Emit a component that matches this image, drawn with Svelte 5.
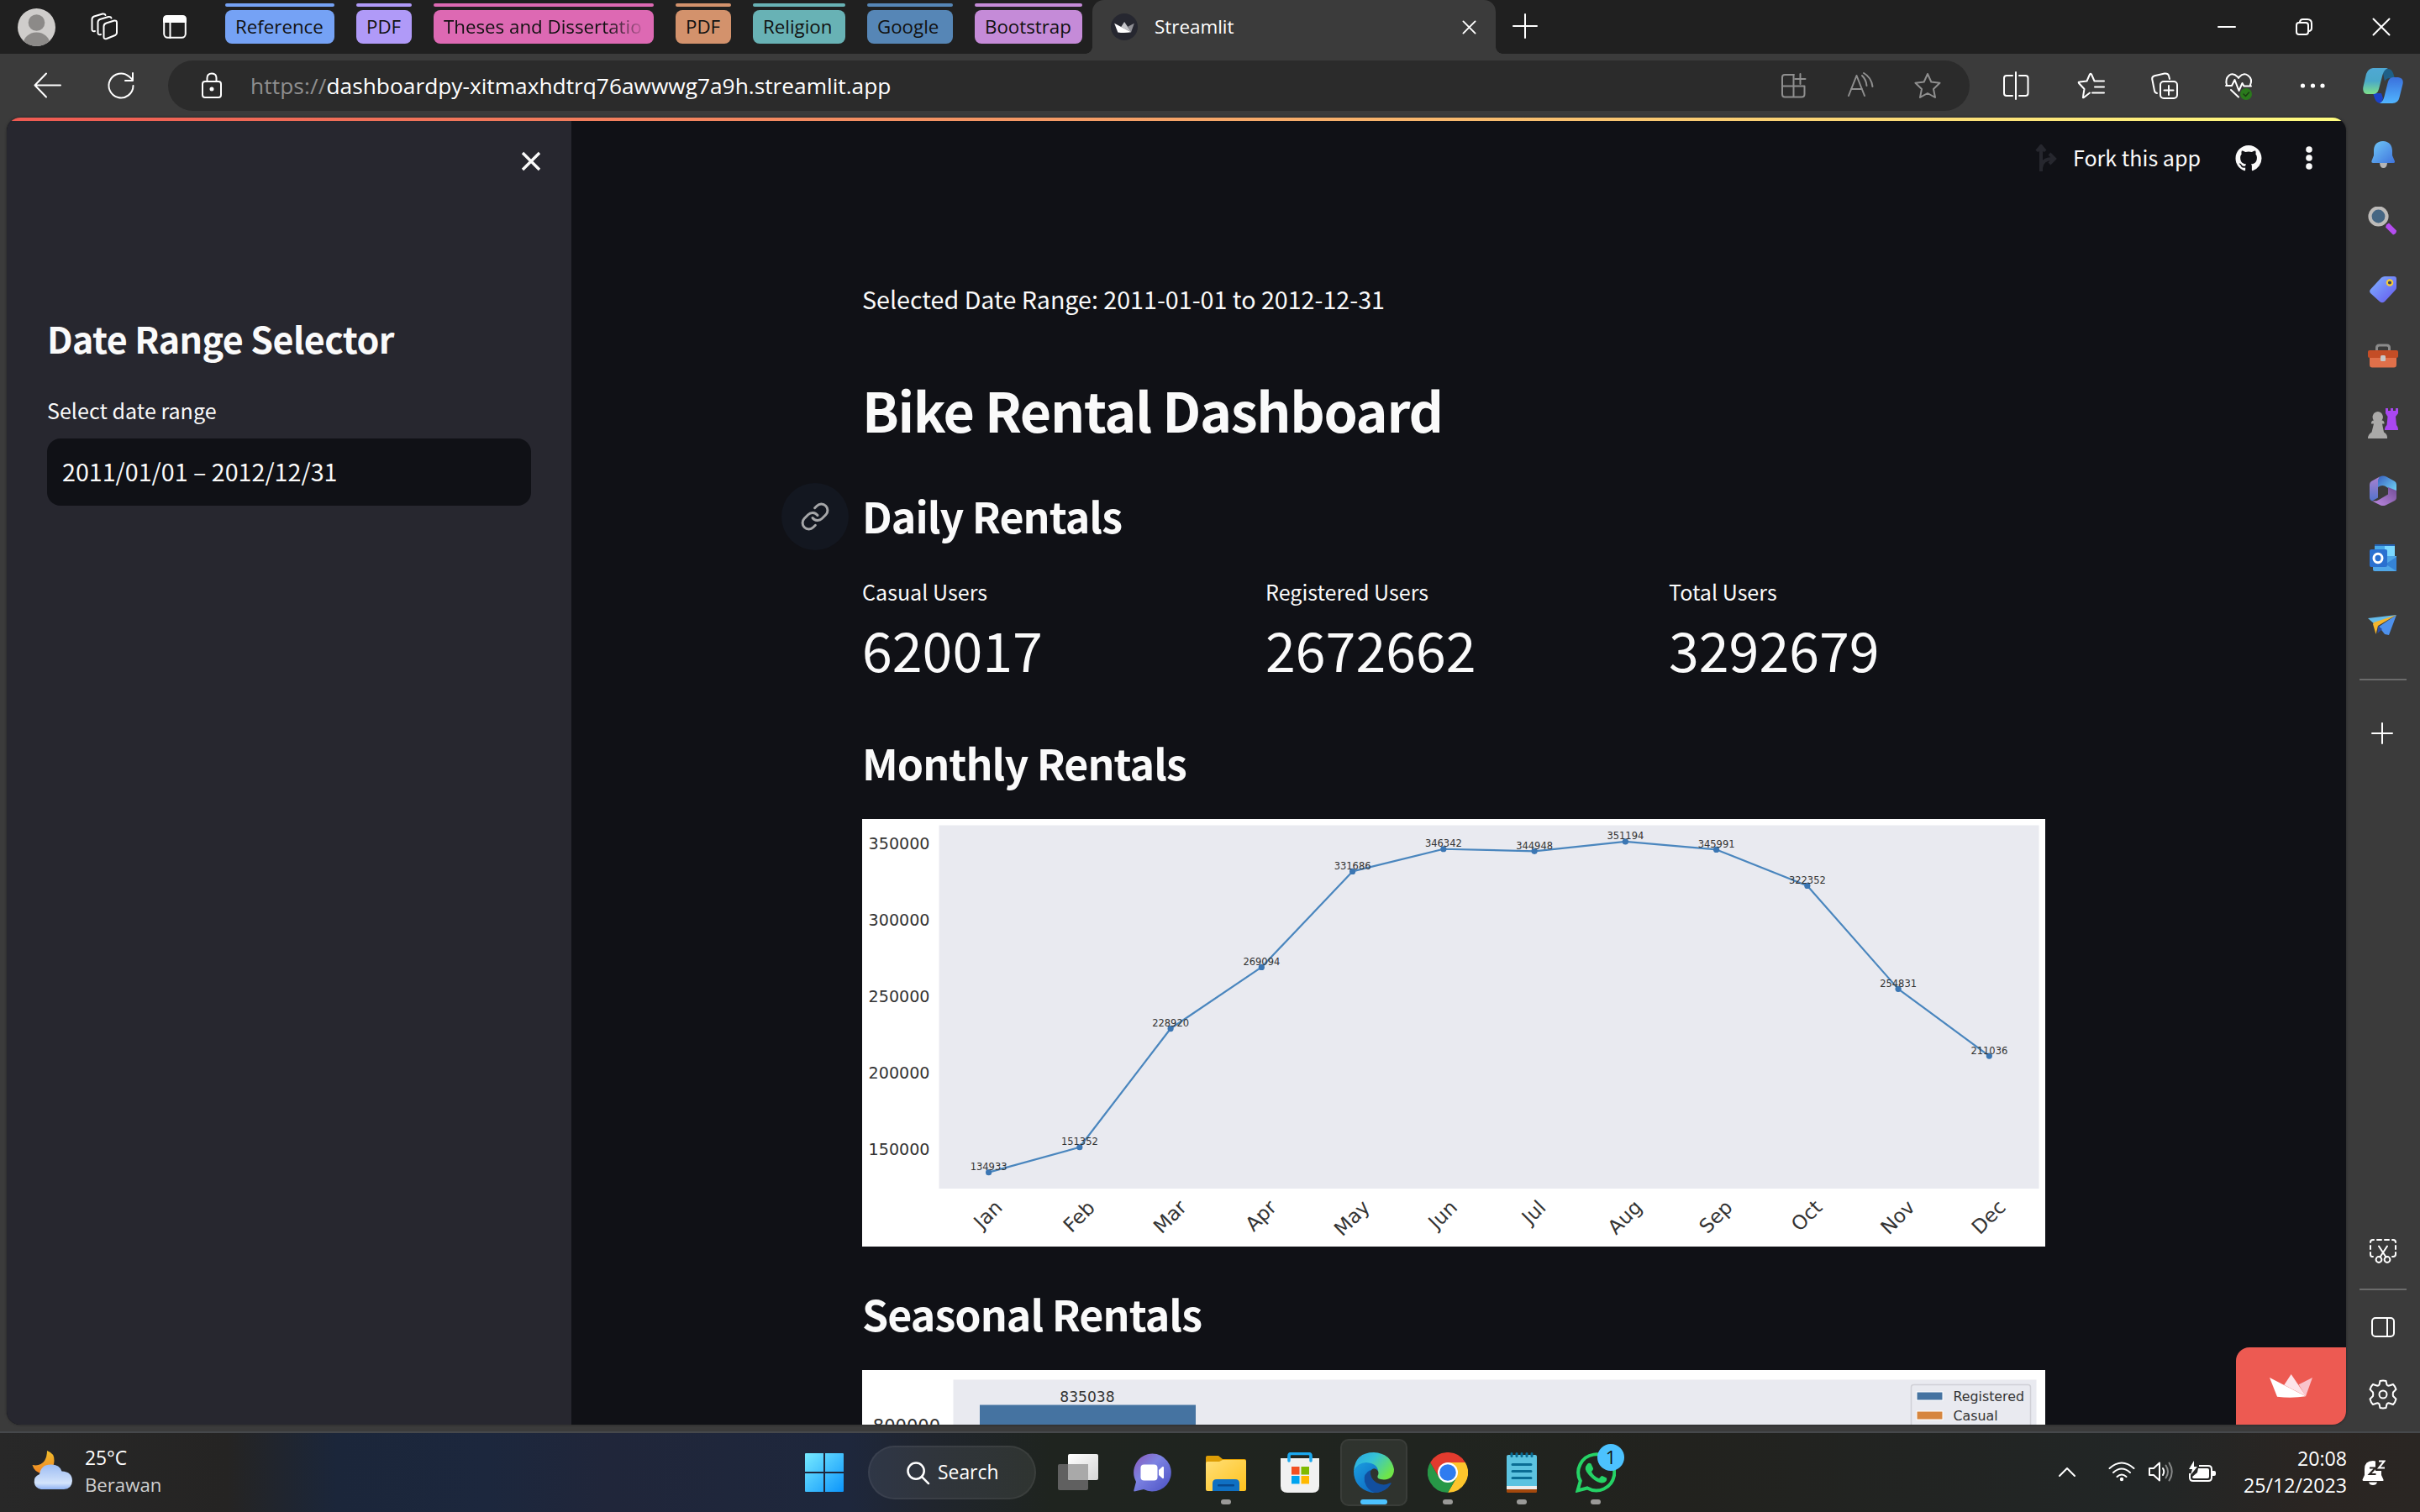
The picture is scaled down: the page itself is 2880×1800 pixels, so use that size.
<script>
  const groups = [
    { name: 'Reference', tone: 'blue', width: 130 },
    { name: 'PDF', tone: 'violet', width: 66 },
    { name: 'Theses and Dissertatio', tone: 'pink', width: 262, fade: true },
    { name: 'PDF', tone: 'orange', width: 66 },
    { name: 'Religion', tone: 'teal', width: 110 },
    { name: 'Google', tone: 'navy', width: 102 },
    { name: 'Bootstrap', tone: 'orchid', width: 128 }
  ];

  const metrics = [
    { label: 'Casual Users', value: '620017' },
    { label: 'Registered Users', value: '2672662' },
    { label: 'Total Users', value: '3292679' }
  ];

  // em: advance width of the month name, used to centre the rotated label
  const months = [
    { name: 'Jan', total: 134933, em: 1.54 },
    { name: 'Feb', total: 151352, em: 1.83 },
    { name: 'Mar', total: 228920, em: 1.89 },
    { name: 'Apr', total: 269094, em: 1.73 },
    { name: 'May', total: 331686, em: 2.07 },
    { name: 'Jun', total: 346342, em: 1.56 },
    { name: 'Jul', total: 344948, em: 1.21 },
    { name: 'Aug', total: 351194, em: 1.95 },
    { name: 'Sep', total: 345991, em: 1.89 },
    { name: 'Oct', total: 322352, em: 1.73 },
    { name: 'Nov', total: 254831, em: 1.95 },
    { name: 'Dec', total: 211036, em: 1.94 }
  ];
  const ticks = [350000, 300000, 250000, 200000, 150000];
  const px = (i) => 150.6 + i * 108.25;
  const py = (v) => 393.2 - (v - 150000) * 0.0018205;
  const line = months.map((m, i) => `${px(i)},${py(m.total)}`).join(' ');
  const tickY = (em) => 452 + (em * 22.8 + 20) * 0.3536;
</script>

{#snippet crown(a, b, c)}
  <svg viewBox="303 588 153 84">
    <path d="M407 625 456 600 432 667Z" fill={c} />
    <path d="M355 626 380 588 433 667Z" fill={b} />
    <path d="M303 600 432 667Q380 675 330 668Z" fill={a} />
  </svg>
{/snippet}

<div class="screen">
  <div class="tabstrip">
    <svg class="avatar" viewBox="0 0 45 45">
      <defs><clipPath id="avc"><circle cx="22.5" cy="22.5" r="22.5" /></clipPath></defs>
      <g clip-path="url(#avc)">
        <rect width="45" height="45" fill="#cfcdcb" />
        <circle cx="22.5" cy="17" r="9.8" fill="#8c8a88" />
        <ellipse cx="22.5" cy="43" rx="16" ry="14.5" fill="#8c8a88" />
      </g>
    </svg>
    <svg class="workspaces line" viewBox="0 0 34 34">
      <path d="M19.5 12.5 29 9.5Q32 9 32 12V24Q32 26 30 27L20 31Q16.500 32 16.500 29V16.500Q16.500 13.500 19.500 12.500Z" />
      <path d="M13 26Q9.500 27 9.500 24V11.500Q9.500 9 12 8L22 5Q25 4.500 25.500 6.500" />
      <path d="M6 22Q2.500 23 2.500 20V8Q2.500 5.500 5 4.500L15 1.500Q18 1 18.500 3" />
    </svg>
    <svg class="tabpane line" viewBox="0 0 28 28">
      <rect x="1.200" y="1.200" width="25.600" height="25.600" rx="4.500" />
      <path d="M1 5Q1 1 5 1H23Q27 1 27 5V8H1Z" fill="#fff" />
      <path d="M8.500 8V27" />
    </svg>
    <div class="groups">
      {#each groups as g}
        <div class="group {g.tone}" style:width="{g.width}px">
          <div class="stripe"></div>
          <div class="chip" class:fade={g.fade}><span>{g.name}</span></div>
        </div>
      {/each}
    </div>
    <div class="tab">
      <div class="favicon">{@render crown('#fff', '#c4c4c8', '#8f8f95')}</div>
      <span class="tabtitle">Streamlit</span>
      <svg class="tabclose line" viewBox="0 0 18 18"><path d="M1.500 1.500 16.500 16.500M16.500 1.500 1.500 16.500" /></svg>
    </div>
    <svg class="newtab line" viewBox="0 0 28 28"><path d="M14 0V28M0 14H28" /></svg>
    <div class="winbtns">
      <svg class="line" viewBox="0 0 20 20"><path d="M0 10H20" /></svg>
      <svg class="line" viewBox="0 0 20 20"><rect x="1" y="5" width="14" height="14" rx="3" /><path d="M5 4Q5.500 1 8.500 1H14Q19 1 19 6V11.500Q19 14.500 16 15" /></svg>
      <svg class="line" viewBox="0 0 20 20"><path d="M.5.5 19.500 19.500M19.500.5.5 19.500" /></svg>
    </div>
  </div>

  <div class="toolbar">
    <svg class="tool line" viewBox="0 0 32 32"><path d="M15 1.500 1.500 15.500 15 29.500M2 15.500H32" /></svg>
    <svg class="tool refresh line" viewBox="0 0 32 32"><path d="M30.500 16A14.500 14.500 0 1 1 25.500 5L30 9M30 1V10H21" /></svg>
    <div class="address">
      <svg class="tool line" viewBox="0 0 32 32"><rect x="5" y="11" width="22" height="19" rx="3" /><path d="M10.500 11V7Q10.500 1.500 16 1.500T21.500 7V11" /><circle cx="16" cy="20" r="1.500" fill="#fff" /></svg>
      <span class="url"><span class="scheme">https://</span>dashboardpy-xitmaxhdtrq76awwwg7a9h.streamlit.app</span>
      <div class="actions dim">
        <svg class="tool line" viewBox="0 0 32 32"><path d="M17 3H6Q3 3 3 6V26Q3 29.500 6 29.500H26Q29.500 29.500 29.500 26V16.500H3M16.500 3V29.500M24.500 2V14M18.500 8H30.500" /></svg>
        <svg class="tool line" viewBox="0 0 32 32"><path d="M2 28 11.500 4 21 28M5 20H18M18 4Q23 9 23.500 16M20 1Q29 6 30.500 17" /></svg>
        <svg class="tool line" viewBox="0 0 32 32"><path d="M16 2 20.300 11.500 30.500 12.800 23 20 25 30 16 25 7 30 9 20 1.500 12.800 11.700 11.500Z" /></svg>
      </div>
    </div>
    <div class="actions outer">
      <svg class="tool line" viewBox="0 0 32 32"><path d="M11 4H4Q1 4 1 7V25Q1 28 4 28H11M19 4H26.500Q29.500 4 29.500 7V25Q29.500 28 26.500 28H19M15 0V32" /></svg>
      <svg class="tool line" viewBox="0 0 32 32"><path d="M15 24.500 8 30Q6.500 31 7 29L8.500 20 2 13Q1 11.500 3 11.500L11.500 10.500 15 2.500Q16 1 17 2.500L20.500 10.500H32M21 17.500H32M18 24.500H32" /></svg>
      <svg class="tool line" viewBox="0 0 32 32"><rect x="11" y="11" width="20" height="20" rx="4" /><path d="M21 16V27M15.500 21.500H26.500M7 25Q4.500 24.500 4 22L1.200 8Q1 5 4 4.200L16 1.500Q20 1 21 4L22 8" /></svg>
      <svg class="tool line" viewBox="0 0 32 32"><path d="M2 15Q0 8 4.500 4T15 5.500L16 7 17 5.500Q22 0 27.500 4T30 15M1 16H8L11.500 9 16.500 22 20.500 13 22.500 16.500H31M7 21 16 29.500" /><circle cx="25" cy="26" r="7" fill="#2a7a1c" stroke="none" /><path d="M22 26 24.500 28.500 28.500 24" class="thin" /></svg>
      <svg class="tool" viewBox="0 0 32 32"><g fill="#fff"><circle cx="4.500" cy="16" r="2.600" /><circle cx="16.500" cy="16" r="2.600" /><circle cx="28" cy="16" r="2.600" /></g></svg>
    </div>
    <svg class="copilot" viewBox="0 0 48 42">
      <defs>
        <linearGradient id="cp1" x1="0" y1="0" x2="0" y2="1"><stop stop-color="#4fa8d4" /><stop offset=".5" stop-color="#4aa8c9" /><stop offset="1" stop-color="#7fe08a" /></linearGradient>
        <linearGradient id="cp2" x1="0" y1="0" x2="0" y2="1"><stop stop-color="#3a70dc" /><stop offset="1" stop-color="#51b5ff" /></linearGradient>
      </defs>
      <path d="M23 1H30Q34 1 36 6L38 12H32Q28 12 26 16Z" fill="#1e5f86" />
      <path d="M12 30H22L24 36 22 42Q16 42 14 36Z" fill="#1c43c8" />
      <path d="M12 0H30Q25 2 23.500 8L19 25Q17.500 31 12 31H5Q-1 30 .5 22L4 7Q6 1 12 0Z" fill="url(#cp1)" />
      <path d="M36 11H42Q49 12 47.500 19L43.500 35Q42 42 35 42H20Q24 40 25.500 34L29.500 18Q31 11 36 11Z" fill="url(#cp2)" />
    </svg>
  </div>

  <div class="body">
    <div class="page">
      <div class="rainbow"></div>
      <div class="columns">
        <aside>
          <svg class="close" viewBox="0 0 24 24"><path d="M2 2 22 22M22 2 2 22" /></svg>
          <h2>Date Range Selector</h2>
          <label for="range">Select date range</label>
          <div class="input" id="range">2011/01/01 – 2012/12/31</div>
        </aside>
        <main>
          <header>
            <svg class="fork" viewBox="0 0 26 32"><path d="M7 32V4M2 8 7 2 12 8M7 28Q8 17 21 17M17 11 23 17 17 23" /></svg>
            <span>Fork this app</span>
            <svg class="github" viewBox="0 0 16 16"><path d="M8 0C3.580 0 0 3.580 0 8c0 3.540 2.290 6.530 5.470 7.590.4.070.55-.17.55-.38 0-.19-.01-.82-.01-1.490-2.010.37-2.530-.49-2.690-.94-.09-.23-.48-.94-.82-1.130-.28-.15-.68-.52-.01-.53.63-.01 1.080.58 1.230.82.72 1.210 1.870.87 2.330.66.07-.52.28-.87.51-1.070-1.780-.2-3.640-.89-3.640-3.950 0-.87.31-1.590.82-2.150-.08-.2-.36-1.020.08-2.120 0 0 .67-.21 2.200.82.64-.18 1.320-.27 2-.27s1.360.09 2 .27c1.530-1.040 2.200-.82 2.200-.82.44 1.100.16 1.920.08 2.120.51.56.82 1.270.82 2.150 0 3.070-1.870 3.750-3.650 3.950.29.25.54.73.54 1.480 0 1.070-.01 1.930-.01 2.200 0 .21.15.46.55.38A8.010 8.010 0 0 0 16 8c0-4.420-3.580-8-8-8z" fill="#fafafa" /></svg>
            <svg class="kebab" viewBox="0 0 8 28"><g fill="#fafafa"><circle cx="4" cy="4" r="3.800" /><circle cx="4" cy="14" r="3.800" /><circle cx="4" cy="24" r="3.800" /></g></svg>
          </header>
          <section>
            <p>Selected Date Range: 2011-01-01 to 2012-12-31</p>
            <h1>Bike Rental Dashboard</h1>
            <h2 class="daily">
              <span class="anchor"><svg viewBox="0 0 24 24"><path d="M10 13a5 5 0 0 0 7.540.54l3-3a5 5 0 0 0-7.070-7.070l-1.720 1.710M14 11a5 5 0 0 0-7.540-.54l-3 3a5 5 0 0 0 7.070 7.070l1.710-1.710" /></svg></span>
              Daily Rentals
            </h2>
            <div class="metrics">
              {#each metrics as m}
                <div><div class="mlabel">{m.label}</div><div class="mvalue">{m.value}</div></div>
              {/each}
            </div>
            <h2 class="monthly">Monthly Rentals</h2>
            <svg class="chart" viewBox="0 0 1408 509">
              <rect width="1408" height="509" fill="#fff" />
              <rect x="91.500" y="7.500" width="1309" height="432.500" fill="#e9eaf0" />
              {#each ticks as t}
                <text class="ytick" x="80.500" y={py(t) + 6.700}>{t}</text>
              {/each}
              <polyline points={line} />
              {#each months as m, i}
                <circle cx={px(i)} cy={py(m.total)} r="3.600" />
                <text class="point" x={px(i)} y={py(m.total) - 2.500}>{m.total}</text>
                <text class="xtick" transform="translate({px(i)} {tickY(m.em)}) rotate(-45)" y="7">{m.name}</text>
              {/each}
            </svg>
            <h2 class="seasonal">Seasonal Rentals</h2>
            <svg class="chart season" viewBox="0 0 1408 65">
              <rect width="1408" height="65" fill="#fff" />
              <rect x="108.500" y="11.500" width="1289" height="60" fill="#e9eaf0" />
              <rect x="140" y="41.500" width="257" height="30" fill="#4573a1" />
              <text class="bar" x="268" y="37.500">835038</text>
              <text class="stick" x="93" y="74">800000</text>
              <rect x="1248.500" y="17.500" width="142" height="60" rx="3" fill="#e9eaf0" stroke="#d0d0d6" stroke-width="1.500" />
              <rect x="1255" y="26" width="31" height="10" fill="#4573a1" stroke="#fff" stroke-width="1" />
              <rect x="1255" y="49" width="31" height="10" fill="#d6863f" stroke="#fff" stroke-width="1" />
              <text class="legend" x="1298.500" y="36.500">Registered</text>
              <text class="legend" x="1298.500" y="59.500">Casual</text>
            </svg>
          </section>
        </main>
      </div>
      <div class="hosted">{@render crown('#fff', '#fde4e9', '#f9c3cb')}</div>
    </div>

    <nav class="rail">
      <svg viewBox="0 0 36 36">
        <defs><linearGradient id="bl" x1="0" y1="0" x2="1" y2="1"><stop stop-color="#71c9f8" /><stop offset="1" stop-color="#3f74dc" /></linearGradient></defs>
        <path d="M14 28H23Q22.500 34 18.500 34T14 28Z" fill="#b5b5b5" />
        <path d="M18 2C10.500 2 7 7 7 13.500V19L4.300 26Q4 28 6 28H30.500Q32.500 28 32 26L29 19V13.500C29 7 25 2 18 2Z" fill="url(#bl)" />
      </svg>
      <svg viewBox="0 1.500 36 36">
        <path d="M22 23 25 21 34 30Q34 34 30 35L21 26Z" fill="#b44df0" />
        <circle cx="12.500" cy="13" r="10" fill="#456683" stroke="#bdbbb9" stroke-width="4.200" />
      </svg>
      <svg viewBox="0 0 36 36">
        <defs><linearGradient id="tg" x1="0" y1="0" x2="1" y2="1"><stop stop-color="#81b5ff" /><stop offset="1" stop-color="#6456ee" /></linearGradient></defs>
        <path d="M20 3H31Q34 3 34 6V16Q34 18 32.500 19.500L20 33Q17 35.500 14 33L3 23Q1 20.500 3.500 18L16 4.500Q18 3 20 3Z" fill="url(#tg)" />
        <circle cx="26" cy="10.500" r="3.200" fill="#3b4160" stroke="#f5cb35" stroke-width="2.200" />
      </svg>
      <svg viewBox="0 0 36 36">
        <path d="M10.500 12V8Q10.500 5 13.500 5H22.500Q25.500 5 25.500 8V12" fill="none" stroke="#8b8b8b" stroke-width="3" />
        <path d="M2 18H34V28Q34 31.500 31 31.500H5Q2 31.500 2 28Z" fill="#e0704a" />
        <path d="M2 11H34Q36 11 36 13V18Q36 20 34 20H2Q0 20 0 18V13Q0 11 2 11Z" fill="#c44d26" />
        <rect x="15" y="17" width="6" height="7" rx="1.500" fill="#c7c7c7" />
      </svg>
      <svg viewBox="0 0 36 36">
        <path d="M21 0H24V3H27V0H30V3H33V0H36V6L33 10 34 20Q36 22 36 26H20Q20 22 22.500 20L23.500 10 21 6Z" fill="#a947f1" />
        <path d="M11.500 4A6.500 6.500 0 0 1 16.500 14.500Q20 15 19.500 18.500H17L19 28.500Q23.500 31 23 36H0Q0 31 4.500 28.500L7 18.500H4Q3.500 15 7 14.500A6.500 6.500 0 0 1 11.500 4Z" fill="#aaa9a8" />
      </svg>
      <svg viewBox="0 0 36 36">
        <defs>
          <linearGradient id="m1" x1="0" y1="0" x2="0" y2="1"><stop stop-color="#a981cf" /><stop offset="1" stop-color="#5273cc" /></linearGradient>
          <linearGradient id="m2" x1="0" y1="0" x2="1" y2="1"><stop stop-color="#3861c0" /><stop offset="1" stop-color="#75dcf8" /></linearGradient>
          <linearGradient id="m3" x1="0" y1="1" x2="1" y2="0"><stop stop-color="#bf8ce4" /><stop offset="1" stop-color="#714c96" /></linearGradient>
        </defs>
        <path d="M14 1.500 4 7Q2 8.500 2 11V26Q2 29 5 30.500L12 26.500V8Z" fill="url(#m1)" />
        <path d="M14 1.500Q18-.5 22 1.500L32 7Q34 8.500 34 11V21L20 12.500Q16 11 12 14V5Z" fill="url(#m2)" />
        <path d="M34 18V26Q34 29 31 30.500L21 35.500Q18 36.500 15 35.500L5 30.500Q10 31 13 29L24 22.500V14Z" fill="url(#m3)" />
      </svg>
      <svg viewBox="0 0 36 36">
        <rect x="8" y="2" width="24" height="20" fill="#48a9e8" /><rect x="20" y="2" width="12" height="14" fill="#7bd8ff" /><rect x="8" y="2" width="24" height="2" fill="#2564b5" />
        <path d="M6 16H34V34H8Q6 34 6 32Z" fill="#50a7e8" /><path d="M34 17 21 25.500 34 34Z" fill="#3583d5" />
        <rect x="2" y="8" width="21" height="21" rx="2" fill="#2a70d0" /><ellipse cx="12" cy="18.500" rx="5" ry="5.200" fill="none" stroke="#fff" stroke-width="3" />
      </svg>
      <svg viewBox="0 0 36 36">
        <path d="M0 10 34 6 9 18Z" fill="#65bceb" /><path d="M34 6 25 30 20 29 13 20Z" fill="#4e91ec" /><path d="M12 19 17 23 11.500 28Z" fill="#284da5" />
        <path d="M34 6 7 15 6 17 9.500 29 12 19Z" fill="#f3b52d" />
      </svg>
      <div class="rule"></div>
      <svg class="plus line" viewBox="0 0 24 24"><path d="M11 0V24M-1 12H23" /></svg>
      <div class="grow"></div>
      <svg class="line" viewBox="0 0 36 36"><path d="M6 24H5Q3 24 3 21V19M3 15V11M3 7Q3 4 6 4H7M11 4H16M20 4H25M29 4H30Q33 4 33 7M33 11V15M33 19V21Q33 24 30 24H29" /><path d="M13 11.500 21.500 24.500M23 11.500 14.500 24.500" /><circle cx="13" cy="27.500" r="3.400" /><circle cx="23" cy="27.500" r="3.400" /></svg>
      <div class="rule low"></div>
      <svg class="panel line" viewBox="0 0 36 36"><rect x="5" y="7" width="26" height="22" rx="4" /><path d="M23 7V29" /></svg>
      <svg class="gear line" viewBox="0 0 36 36"><path d="M14.500 2Q18 1.200 21.500 2L22.500 6.500Q23.500 8 25.500 7.500L30 6Q32.500 8.500 33.500 12L30 15.500Q29.500 18 30 20L33.500 23.500Q32.500 27.500 30 30L25.500 28.500Q23.500 28 22.500 29.500L21.500 34Q18 34.800 14.500 34L13.500 29.500Q12.500 28 10.500 28.500L6 30Q3.500 27.500 2.500 23.500L6 20Q6.500 18 6 15.500L2.500 12Q3.500 8.500 6 6L10.500 7.500Q12.500 8 13.500 6.500Z" /><circle cx="18" cy="18" r="4.500" /></svg>
    </nav>
  </div>

  <footer>
    <div class="weather">
      <svg viewBox="0 0 48 46">
        <defs>
          <linearGradient id="mn" x1="0" y1="0" x2="0" y2="1"><stop stop-color="#f0bd2c" /><stop offset="1" stop-color="#f28522" /></linearGradient>
          <linearGradient id="cd" x1="0" y1="0" x2="0" y2="1"><stop stop-color="#9dbdf3" /><stop offset=".75" stop-color="#d3e3fb" /><stop offset="1" stop-color="#8fb2f2" /></linearGradient>
        </defs>
        <path d="M18 0Q27 3 26.500 12 26 26 12 27 3 26 .5 17 10 19 15 12 18 7 18 0Z" fill="url(#mn)" />
        <path d="M11 46A10.500 9.500 0 0 1 9 28Q11 16 23 16.500 33 16.500 35.500 24.500 48 25 48 36 47.500 45.500 38 46Z" fill="url(#cd)" />
      </svg>
      <div class="reading"><div>25°C</div><div class="cond">Berawan</div></div>
    </div>

    <div class="apps">
      <svg class="app start" viewBox="0 0 46 46"><defs><linearGradient id="win" x1="0" y1="0" x2="46" y2="46" gradientUnits="userSpaceOnUse"><stop stop-color="#77eaff" /><stop offset="1" stop-color="#0c95fb" /></linearGradient></defs><path d="M0 1Q0 0 1 0H22V22H0ZM24 0H45Q46 0 46 1V22H24ZM0 24H22V46H1Q0 46 0 45ZM24 24H46V45Q46 46 45 46H24Z" fill="url(#win)" /></svg>
      <div class="search">
        <svg class="line" viewBox="0 0 28 28"><circle cx="11.500" cy="11.500" r="10" /><path d="M18.500 18.500 27 27" /></svg>
        <span>Search</span>
      </div>
      <svg class="app" viewBox="0 0 48 48"><defs><linearGradient id="tv" x1="0" y1="0" x2="1" y2="1"><stop stop-color="#fff" /><stop offset="1" stop-color="#d6d6d6" /></linearGradient></defs><rect x="0" y="14" width="36" height="31" rx="2" fill="#606060" /><rect x="12" y="2" width="36" height="31" rx="2" fill="url(#tv)" /><path d="M12 14H36V33H14Q12 33 12 31Z" fill="#a9a9a9" /></svg>
      <svg class="app" viewBox="0 0 48 48"><defs><linearGradient id="ch" x1="0" y1="0" x2="1" y2="1"><stop stop-color="#8b57b8" /><stop offset=".4" stop-color="#7d83e2" /><stop offset="1" stop-color="#4a50c4" /></linearGradient></defs><path d="M24.500 1.500A22.500 22.500 0 1 1 14 44L3 46.500Q2 46 2.500 44.500L5 35A22.500 22.500 0 0 1 24.500 1.500Z" fill="url(#ch)" /><rect x="10.500" y="14.500" width="20" height="19" rx="4" fill="#fff" /><path d="M32 21 36.500 17Q38 16.500 38 18V30Q38 31.500 36.500 31L32 27Z" fill="#fff" /></svg>
      <div class="slot dot"><svg class="app" viewBox="0 0 48 48"><defs><linearGradient id="fd" x1="0" y1="0" x2="1" y2="1"><stop stop-color="#ffdf77" /><stop offset="1" stop-color="#ffc21c" /></linearGradient></defs><path d="M0 6Q0 4 2 4H15L20 8H46Q48 8 48 10V20H0Z" fill="#dd9d05" /><path d="M2 11H16L20 9H46Q48 9 48 11V44Q48 46 46 46H2Q0 46 0 44V13Q0 11 2 11Z" fill="url(#fd)" /><path d="M8 46V37Q8 32 13 32H35Q40 32 40 37V46Z" fill="#0f70c3" /><rect x="14" y="38" width="20" height="2.500" rx="1" fill="#07498e" /></svg></div>
      <svg class="app" viewBox="0 0 48 48"><path d="M11 11V4Q11 1.500 14 1.500H34Q37 1.500 37 4V11" fill="none" stroke="#1ba8ef" stroke-width="3.500" /><path d="M1 7H47V40Q47 48 39 48H9Q1 48 1 40Z" fill="#f1f1f1" /><path d="M11 6V10M37 6V10" stroke="#1ba8ef" stroke-width="3.500" stroke-linecap="round" /><rect x="14" y="17" width="9.500" height="9.500" fill="#f25022" /><rect x="25.500" y="17" width="9.500" height="9.500" fill="#7fba00" /><rect x="14" y="28" width="9.500" height="9.500" fill="#00a4ef" /><rect x="25.500" y="28" width="9.500" height="9.500" fill="#ffb900" /></svg>
      <div class="slot active"><svg class="app" viewBox="0 0 48 48">
        <defs>
          <linearGradient id="e1" x1="0" y1="0" x2="1" y2=".6"><stop stop-color="#27a5e5" /><stop offset=".45" stop-color="#35c2d8" /><stop offset="1" stop-color="#6fe548" /></linearGradient>
          <linearGradient id="e2" x1="0" y1="0" x2="1" y2="1"><stop stop-color="#1b9fe0" /><stop offset="1" stop-color="#0b5fbd" /></linearGradient>
        </defs>
        <path d="M0 22Q2 0 24 0 44 1 48 20 48 32 36 32.500 27 32 28.500 28 30.500 25 28.500 21 25 15 16 14 6 14 0 22Z" fill="url(#e1)" />
        <path d="M0 22Q5 12 15 12 28 13 29 22 26 18 22 20 16 25 18 34 22 45 34 46 28 49 20 47.500 0 42 0 22Z" fill="url(#e2)" />
        <path d="M20 21Q11 25 13 35 16 45 25 48 38 48 44.500 37.500 45 35.500 43 36.500 35 40.500 27 36 19 31 20 21Z" fill="#124f9f" />
      </svg></div>
      <div class="slot dot"><svg class="app" viewBox="0 0 48 48">
        <path d="M24 12H44.800A24 24 0 0 1 24 48L34.400 30Z" fill="#fdc52c" />
        <path d="M3.200 12A24 24 0 0 0 24 48L34.400 30 24 24 13.600 30Z" fill="#279847" />
        <path d="M3.200 12 13.600 30 24 12H44.800A24 24 0 0 0 3.200 12Z" fill="#e33b2e" />
        <circle cx="24" cy="24" r="12" fill="#fff" /><circle cx="24" cy="24" r="9.800" fill="#2e7cf0" />
      </svg></div>
      <div class="slot dot"><svg class="app" viewBox="0 0 48 48"><rect x="6" y="40" width="36" height="8" rx="1.500" fill="#a3480c" /><rect x="6" y="38" width="36" height="6" fill="#eee" /><path d="M6 5Q6 3 8 3H40Q42 3 42 5V40H6Z" fill="#5cc3e0" /><g stroke="#0a6d94" stroke-width="3" stroke-linecap="round"><path d="M12 1.500V4.500M18 1.500V4.500M24 1.500V4.500M30 1.500V4.500M36 1.500V4.500M13 14.500H35M13 22.500H35M13 30.500H35" /></g></svg></div>
      <div class="slot dot wa"><svg class="app" viewBox="0 0 48 48"><path d="M2.500 45.500 5.800 34A21.500 21.500 0 1 1 14 42.500Z" fill="none" stroke="#25d366" stroke-width="4" /><path d="M14 14Q16 12 18.500 13.500L21 19Q21.500 20 19 23 22 29 28 31L31 28Q32 27.500 37 30.500 38 34 34 36 28 38 20 31 10 22 12 17Z" fill="#25d366" /></svg><span class="badge">1</span></div>
    </div>

    <div class="tray">
      <svg class="chev line" viewBox="0 0 20 12"><path d="M1 11 10 2 19 11" /></svg>
      <svg class="wifi line" viewBox="0 0 32 24"><path d="M1.500 8Q16-5 30.500 8M6 13Q16 4 26 13M10.500 18Q16 13 21.500 18" /><circle cx="16" cy="21" r="2.200" fill="#fff" stroke="none" /></svg>
      <svg class="speaker line" viewBox="0 0 30 28"><path d="M2 10H7L14 3.500V24.500L7 18H2Z" /><path d="M18 10Q20.500 14 18 18" /><path d="M21.500 6.500Q26.500 14 21.500 21.500M25.500 3.500Q32 14 25.500 24.500" opacity=".45" /></svg>
      <svg class="battery" viewBox="0 0 32 26"><path d="M12 6H23Q27 6 27 10V20Q27 24 23 24H5Q1 24 1 20V15" fill="none" stroke="#fff" stroke-width="2" /><path d="M11 9H22Q24 9 24 11V19Q24 21 22 21H6Q4 21 4 19L10 14Z" fill="#fff" /><path d="M28 12H30Q32 12 32 14V16Q32 18 30 18H28Z" fill="#fff" /><path d="M6 0 0 10H4L2 17 10 7H6Z" fill="#fff" /></svg>
      <div class="clock"><div>20:08</div><div>25/12/2023</div></div>
      <svg class="dnd" viewBox="0 0 28 31"><path d="M13 2Q3 2 3 12V19L.5 24.500Q.5 26 2 26H24.500Q26 26 25.500 24.500L23 19V12Q23 2 13 2ZM8 27.500H18Q17 31 13 31T8 27.500Z" fill="#fff" /><path d="M16 1H28V14H16Z" fill="#292522" /><path d="M9 10.500H16L9 18H16.500" fill="none" stroke="#292522" stroke-width="2.200" /><path d="M20 2.500H26.500L20 10.500H27" fill="none" stroke="#fff" stroke-width="2" /></svg>
    </div>
  </footer>
</div>

<style>
  :global(body) { margin: 0; background: #3b3b3b; }
  .screen { width: 2880px; height: 1800px; display: flex; flex-direction: column; overflow: hidden; background: #3b3b3b; color: #fff; font-family: "Open Sans", "Noto Sans", sans-serif; }
  svg { display: block; flex: none; }
  .line { fill: none; stroke: #fff; stroke-width: 2; stroke-linecap: round; stroke-linejoin: round; overflow: visible; }
  .line .thin { stroke: #1b3a14; stroke-width: 1.5; }

  .tabstrip { height: 64px; flex: none; display: flex; align-items: center; background: #202020; }
  .avatar { width: 45px; height: 45px; margin-left: 21px; }
  .workspaces { width: 34px; height: 34px; margin-left: 41px; }
  .tabpane { width: 28px; height: 28px; margin-left: 53px; }
  .groups { display: flex; gap: 26px; margin-left: 46px; align-self: flex-start; padding-top: 4px; }
  .stripe { height: 4px; border-radius: 2px; background: var(--c); margin-bottom: 4px; }
  .chip { height: 40px; border-radius: 8px; background: var(--c); color: #111; font-size: 22.3px; line-height: 39px; box-sizing: border-box; padding-left: 12px; overflow: hidden; white-space: nowrap; }
  .chip.fade span { display: block; width: 238px; overflow: hidden; background: linear-gradient(90deg, #111 195px, rgba(17, 17, 17, 0.1) 238px); background-clip: text; -webkit-background-clip: text; color: transparent; }
  .blue { --c: #75a2f5; }
  .violet { --c: #b09af8; }
  .pink { --c: #dd69b3; }
  .orange { --c: #d3926c; }
  .teal { --c: #68b2b5; }
  .navy { --c: #5686b6; }
  .orchid { --c: #c58bd8; }
  .tab { position: relative; width: 480px; height: 64px; box-sizing: border-box; margin-left: 12px; padding: 0 23px 0 22px; border-radius: 14px 14px 0 0; background: #3b3b3b; display: flex; align-items: center; }
  .tab::before, .tab::after { content: ""; position: absolute; bottom: 0; width: 8px; height: 8px; }
  .tab::before { left: -8px; background: radial-gradient(circle at 0 0, transparent 7.5px, #3b3b3b 8px); }
  .tab::after { right: -8px; background: radial-gradient(circle at 100% 0, transparent 7.5px, #3b3b3b 8px); }
  .favicon { width: 32px; height: 32px; border-radius: 50%; background: #262730; display: grid; place-items: center; }
  .favicon svg { width: 24px; height: 13px; }
  .tabtitle { font-size: 22.4px; margin-left: 20px; line-height: 62px; }
  .tabclose { width: 17px; height: 17px; margin-left: auto; }
  .newtab { width: 28px; height: 28px; margin-left: 21px; margin-bottom: 2px; }
  .winbtns { margin-left: auto; display: flex; gap: 72px; padding-right: 36px; }
  .winbtns svg { width: 20px; height: 20px; }

  .toolbar { height: 76px; flex: none; display: flex; align-items: center; padding: 0 20px 0 40px; }
  .tool { width: 32px; height: 32px; }
  .refresh { margin-left: 56px; }
  .address { width: 2144px; height: 60px; margin-left: 40px; box-sizing: border-box; padding: 0 34px 0 36px; border-radius: 30px; background: #2b2b2b; display: flex; align-items: center; }
  .url { font-size: 26.3px; margin-left: 30px; line-height: 56px; }
  .scheme { color: #8f8f8f; letter-spacing: 0.1px; }
  .actions { display: flex; }
  .dim { margin-left: auto; gap: 48px; }
  .dim .line { stroke: #8f8f8f; }
  .outer { gap: 56px; margin-left: 40px; }
  .copilot { width: 48px; height: 42px; margin-left: 44px; }

  .body { height: 1564px; flex: none; display: flex; padding-left: 8px; box-sizing: border-box; }
  .page { position: relative; width: 2784px; height: 1556px; border-radius: 16px; overflow: hidden; background: #101116; box-shadow: 0 0 3px #222; font-family: "Noto Sans CJK JP", "Noto Sans CJK SC", "Open Sans", sans-serif; color: #fafafa; }
  .rainbow { height: 4px; background: linear-gradient(90deg, #ef5a52 0%, #f59b66 45%, #fffd80 100%); }
  .columns { display: flex; height: 1552px; }
  aside { width: 672px; flex: none; box-sizing: border-box; padding: 36px 48px 0; background: #27272f; }
  .close { width: 24px; height: 24px; margin-left: auto; margin-right: -12px; fill: none; stroke: #fafafa; stroke-width: 3.4; }
  aside h2 { margin: 169px 0 36px; font-size: 43px; line-height: 58px; font-weight: 600; letter-spacing: -0.6px; }
  label { display: block; font-size: 25.1px; line-height: 42px; margin-bottom: 13px; }
  .input { width: 576px; height: 80px; box-sizing: border-box; padding-left: 18px; border-radius: 16px; background: #101116; font-size: 28.65px; line-height: 77px; }
  main { width: 2112px; }
  header { height: 88px; display: flex; align-items: center; justify-content: flex-end; padding-right: 40px; box-sizing: border-box; font-size: 25.1px; }
  header span { margin: 0 41px 3px 19px; }
  .fork { width: 26px; height: 32px; fill: none; stroke: #26272e; stroke-width: 4; }
  .github { width: 32px; height: 31px; }
  .kebab { width: 8px; height: 28px; margin-left: 52px; }
  section { width: 1408px; margin-left: 346px; }
  p { margin: 98px 0 0; font-size: 28.65px; line-height: 51px; }
  h1 { margin: 63px 0 0; font-size: 64.5px; line-height: 86px; font-weight: 600; letter-spacing: -1.35px; }
  section h2 { margin: 0; font-size: 50.1px; line-height: 67px; font-weight: 600; letter-spacing: -0.95px; }
  section .daily { margin: 50px 0 36px; position: relative; }
  .anchor { position: absolute; left: -96px; top: -5px; width: 80px; height: 80px; border-radius: 50%; background: #131720; display: grid; place-items: center; }
  .anchor svg { width: 36px; height: 36px; fill: none; stroke: #a5a6a8; stroke-width: 2; stroke-linecap: round; stroke-linejoin: round; }
  .metrics { display: grid; grid-template-columns: repeat(3, 448px); gap: 32px; }
  .mlabel { font-size: 25.1px; line-height: 42px; }
  .mvalue { font-size: 64.5px; line-height: 94px; }
  section .monthly { margin: 55px 0 34px; }
  section .seasonal { margin: 46px 0 34px; }
  .chart { width: 1408px; height: 509px; font-family: "DejaVu Sans", sans-serif; fill: #333; }
  .season { height: 65px; }
  .chart polyline { fill: none; stroke: #4a86be; stroke-width: 2.2; stroke-linejoin: round; }
  .chart circle { fill: #3b76b3; }
  .ytick { font-size: 19.1px; text-anchor: end; }
  .point { font-size: 11.5px; text-anchor: middle; }
  .xtick { font-size: 23.4px; text-anchor: middle; }
  .bar { font-size: 17.1px; text-anchor: middle; }
  .stick { font-size: 21px; text-anchor: end; }
  .legend { font-size: 15.8px; }
  .hosted { position: absolute; right: 0; bottom: 0; width: 131px; height: 92px; border-radius: 16px 0 0 0; background: #ed5a52; display: grid; place-items: center; }
  .hosted svg { width: 51px; height: 28px; }

  .rail { width: 88px; height: 1564px; display: flex; flex-direction: column; align-items: center; gap: 44px; padding-top: 26px; box-sizing: border-box; }
  .rail svg { width: 36px; height: 36px; }
  .rail .plus { width: 24px; height: 24px; margin-top: 7px; }
  .rule { width: 56px; height: 2px; flex: none; background: #6b6b6b; margin-top: 2px; }
  .grow { flex: 1; }
  .rail .low { margin-top: -18px; }
  .rail .panel { margin-top: -18px; }
  .rail .gear { margin-bottom: 26px; }

  footer { height: 96px; flex: none; box-sizing: border-box; border-top: 2px solid #46484b; display: grid; grid-template-columns: 958px 1fr auto; align-items: center; background: linear-gradient(90deg, #282828 0, #252423 270px, #1b263a 400px, #1c273d 580px, #20263a 720px, #1e273c 1010px, #20252e 1100px, #1f241f 1250px, #20241f 1700px, #22221e 2000px, #222626 2550px, #2a2522 2750px, #2a2623 2880px); }
  .weather { display: flex; align-items: center; padding-left: 38px; gap: 15px; font-size: 22.8px; line-height: 32px; }
  .weather svg { width: 48px; height: 46px; margin-top: -7px; }
  .reading { padding-bottom: 3px; }
  .cond { color: #cfcfcf; font-size: 22.2px; }
  .apps { display: flex; align-items: center; height: 94px; }
  .app { width: 48px; height: 48px; }
  .start { width: 46px; height: 46px; margin-right: 29px; }
  .search { width: 200px; height: 64px; box-sizing: border-box; border: 2px solid rgba(255, 255, 255, 0.05); border-radius: 32px; background: rgba(255, 255, 255, 0.075); display: flex; align-items: center; padding-left: 44px; gap: 10px; margin-right: 26px; font-size: 22.9px; }
  .search svg { width: 27px; height: 27px; stroke-width: 2.6; }
  .search span { padding-bottom: 2px; }
  .apps > .app:not(.start) { margin-right: 40px; }
  .slot { position: relative; width: 80px; height: 80px; box-sizing: border-box; display: grid; place-items: center; margin: 0 24px 0 -16px; border-radius: 10px; }
  .active { background: rgba(255, 255, 255, 0.07); border: 2px solid rgba(255, 255, 255, 0.05); }
  .slot::after { content: ""; position: absolute; bottom: 2px; left: 50%; height: 6px; border-radius: 3px; width: 12px; margin-left: -6px; background: #9a9a98; }
  .active::after { width: 32px; margin-left: -16px; bottom: 0; background: #4cc2ff; }
  .badge { position: absolute; right: 6px; top: 6px; width: 32px; height: 32px; border-radius: 50%; background: #4cc2ff; color: #111; font-size: 22px; line-height: 31px; text-align: center; }
  .tray { display: flex; align-items: center; padding: 0 41px 2px 0; }
  .chev { width: 20px; height: 12px; }
  .wifi { width: 32px; height: 24px; margin-left: 39px; }
  .speaker { width: 30px; height: 28px; margin-left: 15px; }
  .battery { width: 32px; height: 26px; margin-left: 19px; }
  .clock { width: 156px; text-align: right; font-size: 23.2px; line-height: 32px; }
  .dnd { width: 28px; height: 31px; margin-left: 18px; }
</style>
